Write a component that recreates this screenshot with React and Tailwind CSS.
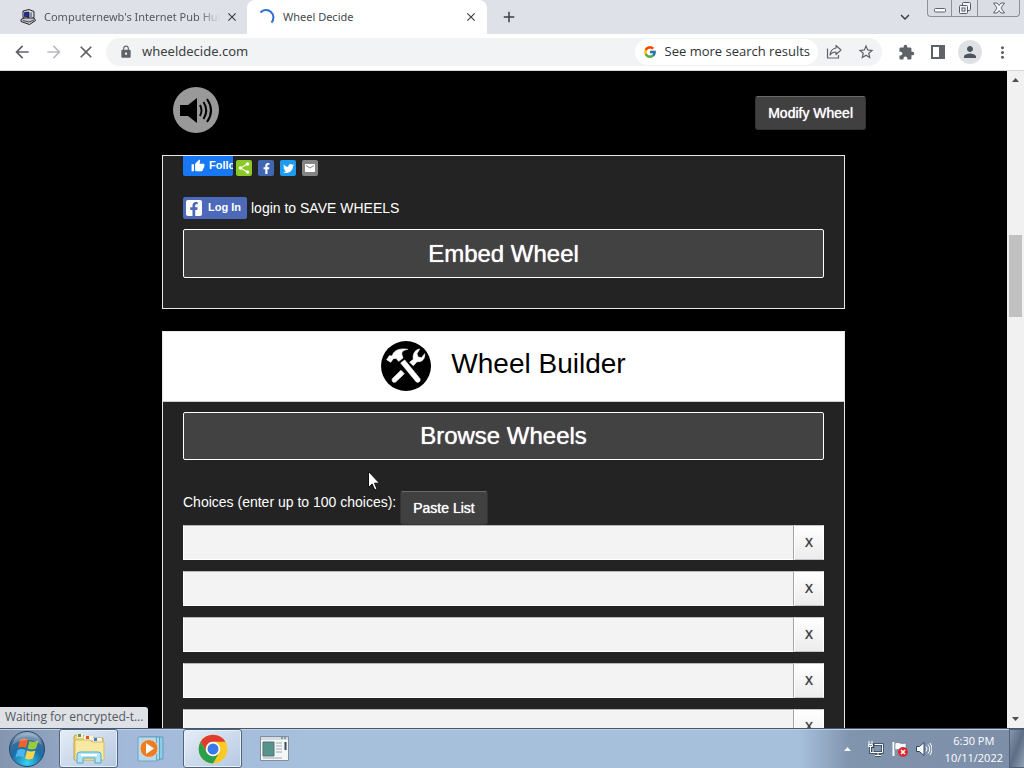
import React from "react";
import { FcGoogle } from "react-icons/fc";
import {
  MdArrowBack,
  MdArrowForward,
  MdClose,
  MdLock,
  MdStarBorder,
  MdExtension,
  MdPerson,
  MdMoreVert,
  MdAdd,
  MdEmail,
  MdShare,
  MdThumbUp,
  MdKeyboardArrowDown,
} from "react-icons/md";
import { FaFacebookF, FaTwitter } from "react-icons/fa";

const iconButton = "flex size-6 shrink-0 items-center justify-center text-[#5f6368]";
const darkButton =
  "rounded-[3px] border border-[#333] border-t-[#6a6a6a] bg-[#404040] px-3 text-sm text-white [text-shadow:0_0_1px_#fff]";
const wideButton =
  "block w-full rounded-[2px] border border-white bg-[#424242] text-2xl text-white [text-shadow:0_0_1px_#fff]";

function ComputerIcon() {
  return (
    <svg className="size-4 shrink-0" viewBox="0 0 16 16" aria-hidden="true">
      <path d="M3 2 9 .5l5 2v6L9 11 3 8.500z" fill="#d8d8e0" stroke="#222" />
      <path d="M4.500 3.500 9 3v5.500L4.500 7.500z" fill="#1a2bb8" stroke="#111" strokeWidth=".7" />
      <path d="M1 10.500 4 9l10 0 1.500 2.500-6 4L1 12.500z" fill="#c8c8d2" stroke="#222" />
      <path d="m3 11.500 6 1.500 5-2" fill="none" stroke="#444" />
      <path d="m10 4 2-1v5l-2 1z" fill="#888a9c" />
    </svg>
  );
}

function WindowControls() {
  return (
    <div className="flex h-[17px] w-[93px] overflow-hidden rounded-b-[4px] border border-t-0 border-[#8b9099] bg-[#dadde4]">
      <button aria-label="Minimize" className="flex w-6 items-center justify-center border-r border-[#8b9099]">
        <svg width="12" height="16" viewBox="0 0 12 16">
          <rect x=".5" y="8.500" width="11" height="3.500" rx="1" fill="#fff" stroke="#5d626b" />
        </svg>
      </button>
      <button aria-label="Restore" className="flex w-[26px] items-center justify-center border-r border-[#8b9099]">
        <svg width="14" height="16" viewBox="0 0 14 16" fill="#f4f5f8" stroke="#555a63">
          <rect x="4.500" y="2.500" width="8" height="8" rx="1" />
          <rect x="1.500" y="5.500" width="8" height="8" rx="1" />
          <rect x="4" y="8" width="3" height="3" />
        </svg>
      </button>
      <button aria-label="Close window" className="flex flex-1 items-center justify-center">
        <svg width="14" height="16" viewBox="0 0 14 16">
          <path
            d="M1.500 3h3.500L7 5.500 9 3h3.500L9 8l3.500 5H9L7 10.500 5 13H1.500L5 8z"
            fill="#f7f8fa"
            stroke="#5d626b"
          />
        </svg>
      </button>
    </div>
  );
}

function TabStrip() {
  return (
    <div className="flex h-[34px] shrink-0 bg-[#dee1e8] font-['Noto_Sans',sans-serif] text-[11px] text-[#45494d]">
      <div className="flex w-[247px] shrink items-center pl-5 pr-[7px]">
        <ComputerIcon />
        <span className="ml-2 flex-1 overflow-hidden whitespace-nowrap text-[#55595e] [mask-image:linear-gradient(to_right,#000_88%,transparent)]">
          Computernewb's Internet Pub Hub
        </span>
        <button aria-label="Close Computernewb tab" className="ml-1 flex size-4 shrink-0 items-center justify-center text-[#3c4043]">
          <MdClose size={14} />
        </button>
      </div>
      <div className="flex w-60 shrink items-center rounded-t-lg bg-white pl-3 pr-2">
        <svg className="size-4 shrink-0" viewBox="0 0 16 16" fill="none" aria-hidden="true">
          <path d="M1.500 3.500A7 7 0 1 1 12.500 13.500" stroke="#2f6fd0" strokeWidth="2" />
        </svg>
        <span className="ml-2 flex-1 whitespace-nowrap">Wheel Decide</span>
        <button aria-label="Close Wheel Decide tab" className="flex size-4 shrink-0 items-center justify-center text-[#3c4043]">
          <MdClose size={14} />
        </button>
      </div>
      <button aria-label="New tab" className="ml-3 flex w-5 items-center justify-center text-[#3c4043]">
        <MdAdd size={18} />
      </button>
      <div className="ml-auto flex items-start pr-1">
        <button aria-label="Search tabs" className="mr-3 flex h-[34px] w-5 items-center justify-center text-[#3c4043]">
          <MdKeyboardArrowDown size={18} />
        </button>
        <WindowControls />
      </div>
    </div>
  );
}

function Toolbar() {
  return (
    <div className="flex h-[37px] shrink-0 items-center border-b border-[#d5d7da] bg-white pl-[10px] pr-[10px] text-[#5f6368]">
      <div className="flex gap-2">
        <button aria-label="Back" className={iconButton}>
          <MdArrowBack size={20} />
        </button>
        <button aria-label="Forward" className="flex size-6 shrink-0 items-center justify-center text-[#b9bbbe]">
          <MdArrowForward size={20} />
        </button>
        <button aria-label="Stop loading" className={iconButton}>
          <MdClose size={20} />
        </button>
      </div>
      <div className="ml-2 mr-3 flex h-7 min-w-0 flex-1 items-center rounded-full bg-[#f1f3f4] pl-[13px] text-[#5f6368]">
        <MdLock size={14} className="shrink-0" />
        <input
          aria-label="Address"
          defaultValue="wheeldecide.com"
          className="ml-[9px] min-w-0 flex-1 bg-transparent font-['Noto_Sans',sans-serif] text-[13px] text-[#3c4043] outline-none"
        />
        <button className="flex h-[26px] items-center gap-2 whitespace-nowrap rounded-full bg-white px-2 text-[13px] text-[#303336]">
          <FcGoogle size={14} />
          See more search results
        </button>
        <div className="ml-1 mr-1 flex gap-2">
          <button aria-label="Share" className={iconButton}>
            <svg width="16" height="16" viewBox="0 0 16 16" fill="none" stroke="currentColor" strokeWidth="1.200">
              <path d="M1.500 4.500v9.500h11v-3" />
              <path d="M10 1.500 15 6l-5 4.500V8C7 8 5.300 9 4 11c.3-3.500 2.200-6.300 6-7z" strokeLinejoin="round" />
            </svg>
          </button>
          <button aria-label="Bookmark" className={iconButton}>
            <MdStarBorder size={18} />
          </button>
        </div>
      </div>
      <div className="flex gap-2">
        <button aria-label="Extensions" className={iconButton}>
          <MdExtension size={17} />
        </button>
        <button aria-label="Side panel" className={iconButton}>
          <svg width="14" height="14" viewBox="0 0 14 14">
            <path fillRule="evenodd" d="M0 0h14v14H0zM2 2v10h6V2z" fill="currentColor" />
          </svg>
        </button>
        <button aria-label="Profile" className="flex size-6 items-center justify-center rounded-full bg-[#dfe1e5] text-[#4c5460]">
          <MdPerson size={18} />
        </button>
        <button aria-label="Menu" className={iconButton}>
          <MdMoreVert size={19} />
        </button>
      </div>
    </div>
  );
}

function SoundIcon() {
  return (
    <svg className="size-[46px]" viewBox="0 0 46 46">
      <circle cx="23" cy="23" r="23" fill="#999" />
      <path d="M7 18h8l9-7v25l-9-7H7z" fill="#000" />
      <g fill="none" stroke="#000" strokeWidth="2">
        <path d="M27 18q3 5.500 0 11" />
        <path d="M30.500 15q5.500 8.500 0 17" />
        <path d="M34 12q8 11.500 0 23" />
      </g>
    </svg>
  );
}

function ToolsIcon() {
  return (
    <svg className="size-[50px] shrink-0" viewBox="0 0 150 150" aria-hidden="true">
      <circle cx="75" cy="75" r="75" fill="#000" />
      <g fill="#fff" stroke="#fff" strokeWidth="2" strokeLinejoin="round">
        <path d="M34 113 60 88l10 10-26 25q-6 2-9-1-3-4-1-9z" />
        <path d="m86 64 11-9c-3-14 4-29 19-31l-8 14 3 10 11 2 9-12c2 15-8 26-23 24L97 74z" />
        <path d="m59 66 12-9 46 56q2 6-2 9t-9 1z" />
        <path d="m17 56 8-12 9 1C36 31 52 20 80 25c-13 2-20 8-17 17l3 9-13 10-8-9-8 1-8 11z" />
      </g>
    </svg>
  );
}

function ShareRow() {
  const tile = "flex size-4 items-center justify-center rounded-[2px] text-white";
  return (
    <div className="flex h-5 items-end">
      <button className="mr-[3px] flex h-5 w-[50px] items-center gap-1 overflow-hidden rounded-b-[2px] bg-[#1877f2] pl-2 text-[11px] font-bold text-white">
        <MdThumbUp size={14} className="shrink-0" />
        Follow
      </button>
      <div className="flex gap-[6px]">
        <button aria-label="Share" className={`${tile} bg-[#8ac926]`}>
          <MdShare size={14} />
        </button>
        <button aria-label="Share on Facebook" className={`${tile} bg-[#4267b2]`}>
          <FaFacebookF size={11} />
        </button>
        <button aria-label="Share on Twitter" className={`${tile} bg-[#1d9bf0]`}>
          <FaTwitter size={11} />
        </button>
        <button aria-label="Share by email" className={`${tile} bg-[#848484]`}>
          <MdEmail size={12} />
        </button>
      </div>
    </div>
  );
}

function ChoiceRow({ index }) {
  return (
    <div className="flex h-[35px]">
      <input
        aria-label={`Choice ${index}`}
        className="min-w-0 flex-1 border border-white border-t-[#b5b5b5] border-r-[#a5a5a5] bg-[#f3f3f3] px-2 text-sm text-black outline-none"
      />
      <button
        aria-label={`Remove choice ${index}`}
        className="w-[30px] border border-white border-t-[#c5c5c5] border-b-[#c5c5c5] bg-linear-to-b from-white to-[#ececec] text-xs text-[#333] [text-shadow:0_0_1px_#555]"
      >
        X
      </button>
    </div>
  );
}

function Page() {
  return (
    <main className="min-w-0 flex-1 overflow-hidden bg-black font-['Liberation_Sans',Arial,sans-serif] text-sm text-white">
      <header className="mx-auto flex h-[84px] max-w-[725px] items-start justify-between pl-8 pt-4">
        <button aria-label="Toggle sound">
          <SoundIcon />
        </button>
        <button className={`${darkButton} mt-[9px] h-[34px]`}>Modify Wheel</button>
      </header>
      <section className="mx-auto h-[154px] max-w-[683px] border border-[#e8e8e8] bg-[#232323] px-5">
        <ShareRow />
        <div className="mt-[21px] flex h-[22px] items-center gap-1">
          <button className="flex h-[22px] w-16 items-center gap-[6px] rounded-[2px] bg-[#4c69ba] pl-[3px] text-[11px] font-bold text-white">
            <span className="flex size-4 items-end justify-center rounded-[2px] bg-white text-[#4c69ba]">
              <FaFacebookF size={14} />
            </span>
            Log In
          </button>
          <span>login to SAVE WHEELS</span>
        </div>
        <button className={`${wideButton} mt-[10px] h-[49px]`}>Embed Wheel</button>
      </section>
      <section className="mx-auto mt-[22px] max-w-[683px] border border-[#e8e8e8] bg-[#232323]">
        <div className="flex h-[70px] items-center justify-center gap-5 border-b border-[#ccc] bg-white pb-[2px] text-black">
          <ToolsIcon />
          <h2 className="pb-1 text-[28px] leading-8">Wheel Builder</h2>
        </div>
        <div className="px-5 pt-[10px]">
          <button className={`${wideButton} h-12`}>Browse Wheels</button>
          <div className="mt-[31px] flex items-start gap-1">
            <span className="leading-[22px]">Choices (enter up to 100 choices):</span>
            <button className={`${darkButton} h-[34px]`}>Paste List</button>
          </div>
          <div className="flex flex-col gap-[11px]">
            {[1, 2, 3, 4, 5].map((n) => (
              <ChoiceRow key={n} index={n} />
            ))}
          </div>
        </div>
      </section>
    </main>
  );
}

function Scrollbar() {
  return (
    <div className="flex w-[17px] shrink-0 flex-col items-center justify-between bg-[#f1f1f1] py-[6px]" aria-hidden="true">
      <svg width="7" height="6" viewBox="0 0 7 6">
        <path d="M0 5 3.500 1 7 5z" fill="#505050" />
      </svg>
      <div className="mt-[152px] mb-auto h-[82px] w-[13px] bg-[#c1c1c1]" />
      <svg width="7" height="6" viewBox="0 0 7 6">
        <path d="M0 1 3.500 5 7 1z" fill="#505050" />
      </svg>
    </div>
  );
}

function StartIcon() {
  return (
    <svg width="38" height="38" viewBox="0 0 38 38">
      <defs>
        <radialGradient id="orb" cx=".5" cy=".9" r=".9">
          <stop offset="0" stopColor="#35d3f4" />
          <stop offset=".5" stopColor="#1a6fa8" />
          <stop offset=".8" stopColor="#426a93" />
          <stop offset="1" stopColor="#a9bfd6" />
        </radialGradient>
      </defs>
      <circle cx="19" cy="19" r="17.500" fill="url(#orb)" stroke="#24456b" />
      <path d="M12 10q4-3 8 0l-2 8q-4-2-8 0z" fill="#f0642c" />
      <path d="M21.500 11q4 2 9-.5l-2.500 8q-4 2-8.500 0z" fill="#9ccb3b" />
      <path d="M9.500 20q4-2 8 0l-2 7.500q-4-2.500-8 0z" fill="#4fb4ee" />
      <path d="M19 20.500q4 2 8.500 0l-2.500 8q-4 2-8 0z" fill="#fdd44b" />
      <path d="M4 15Q7 4 19 3.500T34 15q-7-5-15-5T4 15z" fill="#fff" opacity=".25" />
    </svg>
  );
}

function ExplorerIcon() {
  return (
    <svg width="34" height="32" viewBox="0 0 34 32">
      <path d="M2 4q0-2 2-2h7l2 3h18v22H2z" fill="#e8cf73" stroke="#c4a64d" />
      <path d="M5 1h6v4H5z" fill="#f7f4dd" />
      <path d="M6 1h3v3H6z" fill="#53a345" />
      <path d="M12 3h9v4h-9z" fill="#f7f4dd" />
      <path d="M14 3h3v3h-3z" fill="#e2502f" />
      <path d="M21 5h9v4h-9z" fill="#f7f4dd" />
      <path d="M22 5h3v3h-3z" fill="#3a7edb" />
      <path d="M3 7h15l2 2h12v18H3z" fill="#f8e9a2" stroke="#d8bd65" />
      <path d="M5 30v-8q0-3 3-3h18q3 0 3 3v8h-6v-5H11v5z" fill="#b4e5f6" stroke="#4fa9cc" />
      <path d="M9 22h16" stroke="#fff" strokeWidth="2" />
    </svg>
  );
}

function MediaIcon() {
  return (
    <svg width="28" height="26" viewBox="0 0 28 26">
      <path d="M6 1h20v22H6z" fill="#8fcbe3" stroke="#5aa0c2" />
      <path d="M3.500 1h19v23h-19z" fill="#a9d9ea" stroke="#5aa0c2" />
      <path d="M1 1h18.500v24H1z" fill="#b9d8ea" stroke="#6aa6c4" />
      <circle cx="12" cy="12.500" r="9" fill="#ee7d22" stroke="#d8d8d8" />
      <path d="m9 7 8 5.500L9 18z" fill="#fff" />
    </svg>
  );
}

function ChromeIcon() {
  return (
    <svg width="30" height="30" viewBox="0 0 48 48">
      <circle cx="24" cy="24" r="23" fill="#fbc926" />
      <path d="M4.100 12.500A23 23 0 0 1 43.900 12.500H24a11.500 11.500 0 0 0-10 17.250z" fill="#df3d30" />
      <path d="M4.100 12.500 14 29.750a11.500 11.500 0 0 0 20 0L24 47A23 23 0 0 1 4.100 12.500z" fill="#2aa04f" />
      <circle cx="24" cy="24" r="11.500" fill="#fff" />
      <circle cx="24" cy="24" r="8.800" fill="#3979e8" />
    </svg>
  );
}

function AppWindowIcon() {
  return (
    <svg width="30" height="26" viewBox="0 0 30 26">
      <path d="M.5.5h28v24H.5z" fill="#f3f6f7" stroke="#848e98" />
      <path d="M1 1h27v3H1z" fill="#d3dde5" />
      <path d="M3 6h11v14H3z" fill="#56938a" stroke="#55717d" />
      <path d="M16 7h6M16 10h6M16 13h6M16 16h6M3 22h19" stroke="#a0a8ae" />
      <path d="M25.500 6v8" stroke="#37485a" strokeWidth="2" />
      <path d="M21 2h2M24 2h2" stroke="#41546b" />
    </svg>
  );
}

function Tray() {
  return (
    <div className="ml-auto flex items-center text-white">
      <button aria-label="Show hidden icons" className="mr-4">
        <svg width="9" height="6" viewBox="0 0 9 6">
          <path d="M1 5 4.500 1 8 5z" fill="#f4f7fa" />
        </svg>
      </button>
      <div className="flex items-center gap-2">
        <button aria-label="Network">
          <svg width="16" height="16" viewBox="0 0 16 16" fill="none">
            <path d="M5 3.500h9.500v8H5zM7 14.500h6M10 12v2.500M2.500 5v6.500H5" stroke="#33445a" strokeWidth="2.400" />
            <path d="M6.500 3.500h8v8H5V7M7 14.500h6M10 12v2.500" stroke="#fff" />
            <path d="M1 0v3M4 0v3M.5 3.500h4v2h-4zM2.500 6v5.500H5" stroke="#fff" />
          </svg>
        </button>
        <button aria-label="Action center">
          <svg width="16" height="16" viewBox="0 0 16 16">
            <path d="M1.500 1v14" stroke="#fff" strokeWidth="2" />
            <path d="M3 2q3-1 5 0t6 0v7q-3 1-5.500 0T3 9z" fill="#fff" stroke="#4a596d" strokeWidth=".5" />
            <circle cx="11" cy="11" r="5" fill="#d92b36" />
            <path d="m9 9 4 4m0-4-4 4" stroke="#fff" strokeWidth="1.500" />
          </svg>
        </button>
        <button aria-label="Volume">
          <svg width="16" height="16" viewBox="0 0 16 16">
            <path d="M.5 5.500h3L8 1.500v13l-4.500-4h-3z" fill="#fff" stroke="#33455c" />
            <path d="M10 5.500q2 2.500 0 5M12 3.500q3.500 4.500 0 9M14 2q4 6 0 12" fill="none" stroke="#fff" />
          </svg>
        </button>
      </div>
      <div className="ml-[13px] mr-[6px] text-center text-[11px] leading-[17px]">
        <div>6:30 PM</div>
        <div>10/11/2022</div>
      </div>
      <button
        aria-label="Show desktop"
        className="h-full w-[15px] border border-r-0 border-[#4f6079] bg-linear-to-br from-[#8797ac] via-[#5d6e86] to-[#93a2b5]"
      />
    </div>
  );
}

function Taskbar() {
  const slot = "flex w-[59px] items-center justify-center";
  const active =
    "rounded-[3px] border border-[#50647f] bg-linear-to-br from-[#e6edf6] to-[#b5c8e2] shadow-[inset_0_0_0_1px_#e8f0fa]";
  return (
    <footer className="flex h-10 shrink-0 border-t border-[#46586f] bg-[linear-gradient(to_right,#8495ae_0%,#8fa3bf_5%,#a3b9da_12%,#a6c0dc_30%,#a6c0dc_78%,#8194ae_83%,#7c8ea8_100%)] shadow-[inset_0_1px_0_#c2d0e2]">
      <button aria-label="Start" className="flex w-[54px] items-center justify-center">
        <StartIcon />
      </button>
      <div className="ml-[5px] flex gap-[3px]">
        <button aria-label="File Explorer" className={`${slot} ${active}`}>
          <ExplorerIcon />
        </button>
        <button aria-label="Media Player" className={slot}>
          <MediaIcon />
        </button>
        <button aria-label="Chrome" className={`${slot} ${active}`}>
          <ChromeIcon />
        </button>
        <button aria-label="Application" className={slot}>
          <AppWindowIcon />
        </button>
      </div>
      <Tray />
    </footer>
  );
}

export default function App() {
  return (
    <div className="relative flex h-screen flex-col overflow-hidden font-['Open_Sans','Noto_Sans',sans-serif]">
      <TabStrip />
      <Toolbar />
      <div className="relative flex min-h-0 flex-1">
        <Page />
        <Scrollbar />
        <div className="absolute bottom-0 left-0 h-[21px] w-[148px] truncate rounded-tr-[3px] bg-[#dee1e6] pl-[5px] text-xs leading-5 text-[#55585c]">
          Waiting for encrypted-t...
        </div>
      </div>
      <Taskbar />
      <svg className="pointer-events-none absolute left-[368px] top-[471px]" width="12" height="20" viewBox="0 0 12 20" aria-hidden="true">
        <path d="M.5.5v16l3.700-3.500 2.600 6 2.200-1-2.500-5.800h5z" fill="#fff" stroke="#111" />
      </svg>
    </div>
  );
}
